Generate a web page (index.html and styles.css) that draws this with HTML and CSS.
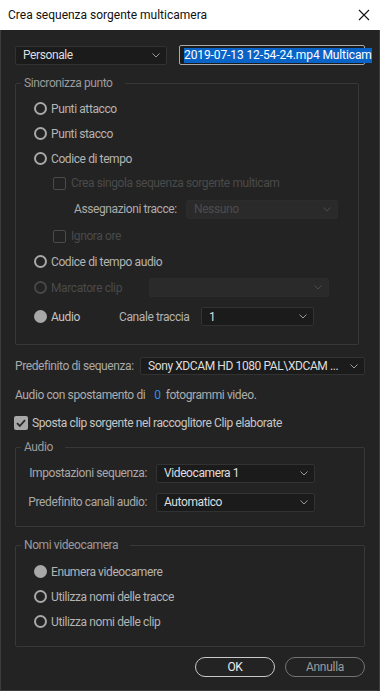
FILE: index.html
```html
<!DOCTYPE html>
<html lang="it">

<head>
    <meta charset="UTF-8">
    <meta name="viewport" content="width=device-width, initial-scale=1.0">
    <title>Crea sequenza sorgente multicamera</title>
    <link rel="stylesheet" href="styles.css">
</head>

<body>

    <header class="titlebar">
        <span class="title">Crea sequenza sorgente multicamera</span>
        <svg class="close" width="12" height="12" viewBox="0 0 12 12">
            <path d="M1 1L11 11M11 1L1 11" stroke="#111" stroke-width="1.1" fill="none" />
        </svg>
    </header>

    <main class="dialog">

        <div class="top-row">
            <div class="select preset">
                <span>Personale</span>
                <svg class="chev" width="8" height="5" viewBox="0 0 8 5"><path d="M0.5 0.5L4 4L7.5 0.5" /></svg>
            </div>
            <div class="name-input"><span class="selected">2019-07-13 12-54-24.mp4 Multicam</span></div>
        </div>

        <!-- Sincronizza punto -->
        <fieldset class="group sync">
            <legend>Sincronizza punto</legend>
            <div class="rows">
                <div class="row h25"><span class="radio"></span>Punti attacco</div>
                <div class="row h25"><span class="radio"></span>Punti stacco</div>
                <div class="row h25"><span class="radio"></span>Codice di tempo</div>
                <div class="row h24 sub disabled"><span class="check"></span>Crea singola sequenza sorgente multicam</div>
                <div class="row h28 tracks">
                    <span class="tracks-label">Assegnazioni tracce:</span>
                    <div class="select off tracks-select">
                        <span>Nessuno</span>
                        <svg class="chev" width="8" height="5" viewBox="0 0 8 5"><path d="M0.5 0.5L4 4L7.5 0.5" /></svg>
                    </div>
                </div>
                <div class="row h26 sub disabled"><span class="check"></span>Ignora ore</div>
                <div class="row h25"><span class="radio"></span>Codice di tempo audio</div>
                <div class="row h27 disabled">
                    <span class="radio"></span><span class="marker-label">Marcatore clip</span>
                    <div class="select off marker-select">
                        <span></span>
                        <svg class="chev" width="8" height="5" viewBox="0 0 8 5"><path d="M0.5 0.5L4 4L7.5 0.5" /></svg>
                    </div>
                </div>
                <div class="row h31">
                    <span class="radio on"></span><span class="audio-label">Audio</span>
                    <span class="channel-label">Canale traccia</span>
                    <div class="select channel-select">
                        <span>1</span>
                        <svg class="chev" width="8" height="5" viewBox="0 0 8 5"><path d="M0.5 0.5L4 4L7.5 0.5" /></svg>
                    </div>
                </div>
            </div>
        </fieldset>

        <div class="line preset-line">
            <span class="preset-label">Predefinito di sequenza:</span>
            <div class="select seq-select">
                <span>Sony XDCAM HD 1080 PAL\XDCAM ...</span>
                <svg class="chev" width="8" height="5" viewBox="0 0 8 5"><path d="M0.5 0.5L4 4L7.5 0.5" /></svg>
            </div>
        </div>

        <div class="line offset-line">
            Audio con spostamento di <span class="number">0</span> fotogrammi video.
        </div>

        <div class="line move-line">
            <span class="check on">
                <svg width="14" height="14" viewBox="0 0 14 14"><path d="M3 7.2L5.8 10L11 4.2" /></svg>
            </span>
            Sposta clip sorgente nel raccoglitore Clip elaborate
        </div>

        <!-- Audio -->
        <fieldset class="group wide audio">
            <legend>Audio</legend>
            <div class="rows">
                <div class="row h26 field">
                    <span class="field-label">Impostazioni sequenza:</span>
                    <div class="select field-select">
                        <span>Videocamera 1</span>
                        <svg class="chev" width="8" height="5" viewBox="0 0 8 5"><path d="M0.5 0.5L4 4L7.5 0.5" /></svg>
                    </div>
                </div>
                <div class="row h26 field">
                    <span class="field-label">Predefinito canali audio:</span>
                    <div class="select field-select">
                        <span>Automatico</span>
                        <svg class="chev" width="8" height="5" viewBox="0 0 8 5"><path d="M0.5 0.5L4 4L7.5 0.5" /></svg>
                    </div>
                </div>
            </div>
        </fieldset>

        <!-- Nomi videocamera -->
        <fieldset class="group wide names">
            <legend>Nomi videocamera</legend>
            <div class="rows">
                <div class="row h25"><span class="radio on"></span>Enumera videocamere</div>
                <div class="row h25"><span class="radio"></span>Utilizza nomi delle tracce</div>
                <div class="row h25"><span class="radio"></span>Utilizza nomi delle clip</div>
            </div>
        </fieldset>

        <div class="buttons">
            <button type="button" class="btn primary">OK</button>
            <button type="button" class="btn">Annulla</button>
        </div>

    </main>

</body>

</html>
```

FILE: styles.css
```css
body {
    margin: 0;
    background-color: #232323;
    font-family: Roboto, "Liberation Sans", sans-serif;
}

.titlebar {
    height: 30px;
    background-color: #fff;
    display: flex;
    align-items: center;
    justify-content: space-between;
    padding: 0 10px 0 8px;
    box-sizing: border-box;
}

.title {
    font-family: Roboto, sans-serif;
    font-size: 12px;
    color: #111;
}

.dialog {
    height: 661px;
    box-sizing: border-box;
    border: 1px solid #3c3c3c;
    border-top: 0;
    padding: 15px 14px 0;
    color: #b4b4b4;
    font-size: 12px;
    letter-spacing: -0.4px;
}

/* dropdowns */
.select {
    display: flex;
    align-items: center;
    justify-content: space-between;
    box-sizing: border-box;
    height: 19px;
    background-color: #1b1b1b;
    border: 1px solid #323232;
    border-radius: 2px;
    padding: 0 6px 0 7px;
    color: #dedede;
}

.chev {
    flex: none;
}

.chev path {
    fill: none;
    stroke: #9a9a9a;
    stroke-width: 1;
}

.select.off {
    background-color: #2a2a2a;
    border-color: #2c2c2c;
    color: #4c4c4c;
}

.select.off .chev path {
    stroke: #4c4c4c;
}

.top-row {
    display: flex;
    align-items: center;
    height: 20px;
}

.preset {
    width: 152px;
}

.name-input {
    margin-left: 12px;
    width: 186px;
    height: 20px;
    box-sizing: border-box;
    border: 1px solid #a9a9a9;
    border-radius: 2px;
    background-color: #1b1b1b;
    display: flex;
    align-items: center;
    padding-left: 4px;
    letter-spacing: -0.1px;
}

.selected {
    background-color: #0a64c8;
    color: #fff;
    line-height: 15px;
    white-space: nowrap;
}

/* groups */
.group {
    margin: 10px 0 0;
    padding: 0;
    border: 1px solid #383838;
    border-radius: 2px;
    min-width: 0;
}

.group legend {
    margin-left: 5px;
    padding: 0 12px 0 3px;
    line-height: 16px;
    color: #9b9b9b;
}

.sync {
    margin-right: 6px;
}

.wide {
    margin-right: 0;
}

.rows {
    padding: 5px 0 12px 18px;
}

.row {
    display: flex;
    align-items: center;
    white-space: nowrap;
}

.h24 { height: 24px; }
.h25 { height: 25px; }
.h26 { height: 26px; }
.h27 { height: 27px; }
.h28 { height: 28px; }
.h31 { height: 31px; }

.radio {
    flex: none;
    width: 13px;
    height: 13px;
    box-sizing: border-box;
    border: 2px solid #a8a8a8;
    border-radius: 50%;
    margin-right: 4px;
}

.radio.on {
    background-color: #a8a8a8;
}

.check {
    flex: none;
    width: 13px;
    height: 13px;
    box-sizing: border-box;
    border: 1.5px solid #4a4a4a;
    border-radius: 2px;
    margin-right: 5px;
}

.sub {
    padding-left: 19px;
}

.disabled {
    color: #4a4a4a;
}

.disabled .radio {
    border-color: #474747;
}

.tracks-label {
    margin-left: 40px;
    width: 112px;
    color: #acacac;
}

.tracks-select {
    width: 152px;
}

.marker-label {
    width: 98px;
}

.marker-select {
    width: 180px;
}

.audio-label {
    color: #c4c4c4;
    width: 68px;
}

.channel-label {
    width: 82px;
}

.channel-select {
    width: 113px;
}

/* loose lines */
.line {
    display: flex;
    align-items: center;
    height: 18px;
    white-space: nowrap;
}

.preset-line {
    margin-top: 12px;
}

.preset-label {
    width: 125px;
    color: #a9a9a9;
}

.seq-select {
    flex: 1;
    height: 18px;
}

.offset-line {
    margin-top: 11px;
    color: #acacac;
}

.number {
    color: #2d8ceb;
    margin: 0 5px 0 9px;
}

.move-line {
    margin-top: 10px;
    margin-left: -1px;
    color: #c6c6c6;
}

.check.on {
    width: 14px;
    height: 14px;
    border: 0;
    background-color: #a8a8a8;
    margin-right: 4px;
}

.check.on svg {
    display: block;
}

.check.on path {
    fill: none;
    stroke: #2a2a2a;
    stroke-width: 1.8;
}

.audio {
    margin-top: 7px;
}

.audio .rows {
    padding: 5px 0 11px 0;
}

.audio .row + .row {
    margin-top: 3px;
}

.field-label {
    width: 131px;
    text-align: right;
    color: #a9a9a9;
}

.field-select {
    margin-left: 9px;
    width: 159px;
}

.names .rows {
    padding-top: 6px;
    padding-bottom: 12px;
}

/* buttons */
.buttons {
    display: flex;
    justify-content: flex-end;
    gap: 10px;
    margin-top: 10px;
}

.btn {
    width: 80px;
    height: 20px;
    padding: 0;
    border: 1.5px solid #747474;
    border-radius: 10px;
    background-color: transparent;
    color: #9c9c9c;
    font-family: Roboto, "Liberation Sans", sans-serif;
    font-size: 12px;
    letter-spacing: -0.3px;
}

.btn.primary {
    border-color: #c9c9c9;
    color: #ececec;
}
```
